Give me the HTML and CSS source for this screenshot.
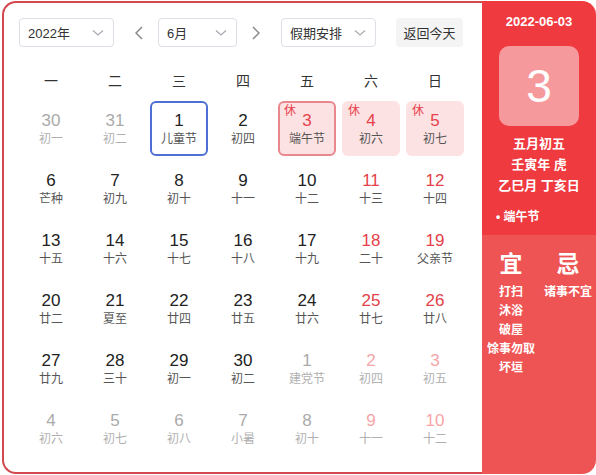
FILE: index.html
```html
<!DOCTYPE html>
<html lang="zh">
<head>
<meta charset="utf-8">
<link rel="stylesheet" href="styles.css">
</head>
<body>
<div class="app">
  <div class="main">
    <div class="toolbar">
      <div class="select sel-year"><span>2022年</span><svg class="chev" viewBox="0 0 12 8"><path d="M1 1.5 L6 6 L11 1.5" /></svg></div>
      <svg class="arrow arrow-prev" viewBox="0 0 8 14"><path d="M7 1 L1 7 L7 13" /></svg>
      <div class="select sel-month"><span>6月</span><svg class="chev" viewBox="0 0 12 8"><path d="M1 1.5 L6 6 L11 1.5" /></svg></div>
      <svg class="arrow arrow-next" viewBox="0 0 8 14"><path d="M1 1 L7 7 L1 13" /></svg>
      <div class="select sel-holiday"><span>假期安排</span><svg class="chev" viewBox="0 0 12 8"><path d="M1 1.5 L6 6 L11 1.5" /></svg></div>
      <div class="today-btn">返回今天</div>
    </div>
    <div class="weekdays">
      <span>一</span><span>二</span><span>三</span><span>四</span><span>五</span><span>六</span><span>日</span>
    </div>
    <div class="grid">
      <div class="cell other"><b>30</b><i>初一</i></div>
      <div class="cell other"><b>31</b><i>初二</i></div>
      <div class="cell today"><b>1</b><i>儿童节</i></div>
      <div class="cell"><b>2</b><i>初四</i></div>
      <div class="cell rest selected"><em>休</em><b>3</b><i>端午节</i></div>
      <div class="cell rest"><em>休</em><b>4</b><i>初六</i></div>
      <div class="cell rest"><em>休</em><b>5</b><i>初七</i></div>

      <div class="cell"><b>6</b><i>芒种</i></div>
      <div class="cell"><b>7</b><i>初九</i></div>
      <div class="cell"><b>8</b><i>初十</i></div>
      <div class="cell"><b>9</b><i>十一</i></div>
      <div class="cell"><b>10</b><i>十二</i></div>
      <div class="cell weekend"><b>11</b><i>十三</i></div>
      <div class="cell weekend"><b>12</b><i>十四</i></div>

      <div class="cell"><b>13</b><i>十五</i></div>
      <div class="cell"><b>14</b><i>十六</i></div>
      <div class="cell"><b>15</b><i>十七</i></div>
      <div class="cell"><b>16</b><i>十八</i></div>
      <div class="cell"><b>17</b><i>十九</i></div>
      <div class="cell weekend"><b>18</b><i>二十</i></div>
      <div class="cell weekend"><b>19</b><i>父亲节</i></div>

      <div class="cell"><b>20</b><i>廿二</i></div>
      <div class="cell"><b>21</b><i>夏至</i></div>
      <div class="cell"><b>22</b><i>廿四</i></div>
      <div class="cell"><b>23</b><i>廿五</i></div>
      <div class="cell"><b>24</b><i>廿六</i></div>
      <div class="cell weekend"><b>25</b><i>廿七</i></div>
      <div class="cell weekend"><b>26</b><i>廿八</i></div>

      <div class="cell"><b>27</b><i>廿九</i></div>
      <div class="cell"><b>28</b><i>三十</i></div>
      <div class="cell"><b>29</b><i>初一</i></div>
      <div class="cell"><b>30</b><i>初二</i></div>
      <div class="cell other"><b>1</b><i>建党节</i></div>
      <div class="cell other weekend"><b>2</b><i>初四</i></div>
      <div class="cell other weekend"><b>3</b><i>初五</i></div>

      <div class="cell other"><b>4</b><i>初六</i></div>
      <div class="cell other"><b>5</b><i>初七</i></div>
      <div class="cell other"><b>6</b><i>初八</i></div>
      <div class="cell other"><b>7</b><i>小暑</i></div>
      <div class="cell other"><b>8</b><i>初十</i></div>
      <div class="cell other weekend"><b>9</b><i>十一</i></div>
      <div class="cell other weekend"><b>10</b><i>十二</i></div>
    </div>
  </div>
  <div class="side">
    <div class="side-top">
      <div class="side-date">2022-06-03</div>
      <div class="big-day">3</div>
      <div class="lunar-lines">
        <div>五月初五</div>
        <div>壬寅年 虎</div>
        <div>乙巳月 丁亥日</div>
      </div>
      <div class="festival">• 端午节</div>
    </div>
    <div class="side-bottom">
      <div class="yiji">
        <div class="yj-head">宜</div>
        <div>打扫</div>
        <div>沐浴</div>
        <div>破屋</div>
        <div>馀事勿取</div>
        <div>坏垣</div>
      </div>
      <div class="yiji">
        <div class="yj-head">忌</div>
        <div>诸事不宜</div>
      </div>
    </div>
  </div>
</div>
</body>
</html>
```

FILE: styles.css
```css
* { box-sizing: border-box; }
html, body { margin: 0; padding: 0; background: #fff; }
body {
  font-family: "Liberation Sans", "Noto Sans CJK SC", Arial, sans-serif;
  color: #333;
}
.app {
  display: flex;
  width: 594px;
  height: 473px;
  margin: 1px 0 0 2px;
}
.main {
  width: 480px;
  height: 100%;
  border: 2px solid #d3474e;
  border-right: none;
  border-radius: 14px 0 0 14px;
  background: #fff;
}
.toolbar {
  display: flex;
  align-items: center;
  height: 29px;
  margin: 15px 0 0 15px;
}
.select {
  display: flex;
  align-items: center;
  justify-content: space-between;
  height: 29px;
  padding: 0 9px 0 8px;
  border: 1px solid #dcdfe6;
  border-radius: 4px;
  font-size: 13px;
  color: #333;
}
.sel-year { width: 95px; }
.sel-month { width: 79px; }
.sel-holiday { width: 95px; }
.chev { width: 12px; height: 8px; }
.chev path { fill: none; stroke: #a8abb2; stroke-width: 1.3; }
.arrow { width: 8px; height: 14px; }
.arrow path { fill: none; stroke: #888; stroke-width: 1.5; }
.arrow-prev { margin: 0 15px 0 21px; }
.arrow-next { margin: 0 21px 0 15px; }
.today-btn {
  margin-left: 20px;
  height: 29px;
  width: 67px;
  display: flex;
  align-items: center;
  justify-content: center;
  background: #f4f4f5;
  border-radius: 4px;
  font-size: 13px;
  color: #333;
}
.weekdays {
  display: grid;
  grid-template-columns: repeat(7, 58px);
  column-gap: 6px;
  margin: 24px 0 0 18px;
  height: 20px;
  line-height: 20px;
  text-align: center;
  font-size: 14px;
  color: #333;
}
.grid {
  display: grid;
  grid-template-columns: repeat(7, 58px);
  grid-auto-rows: 55px;
  column-gap: 6px;
  row-gap: 5px;
  margin: 10px 0 0 18px;
}
.cell {
  position: relative;
  display: flex;
  flex-direction: column;
  align-items: center;
  justify-content: center;
  padding-top: 1px;
  border-radius: 6px;
  border: 2px solid transparent;
}
.cell b {
  font-weight: normal;
  font-size: 17px;
  line-height: 20px;
  color: #222;
}
.cell i {
  font-style: normal;
  font-size: 12px;
  line-height: 17px;
  color: #555;
}
.cell.other b { color: #aaa; }
.cell.other i { color: #b0b0b0; }
.cell.weekend b { color: #e5414a; }
.cell.other.weekend b { color: #f5a5a9; }
.cell.today { border-color: #4e6fd3; }
.cell.rest { background: #fde2e3; }
.cell.rest b { color: #e5414a; }
.cell.selected { border-color: #e8878c; }
.cell em {
  position: absolute;
  left: 4px;
  top: 1px;
  font-style: normal;
  font-size: 12px;
  line-height: 14px;
  color: #e5414a;
}
.side {
  width: 114px;
  height: 100%;
  border-radius: 0 14px 14px 0;
  overflow: hidden;
  display: flex;
  flex-direction: column;
  color: #fff;
}
.side-top {
  background: #ef3a3f;
  height: 234px;
  display: flex;
  flex-direction: column;
  align-items: center;
  padding-top: 13px;
}
.side-date {
  font-size: 13px;
  font-weight: bold;
  line-height: 16px;
}
.big-day {
  margin-top: 16px;
  width: 80px;
  height: 80px;
  border-radius: 10px;
  background: #f5999c;
  display: flex;
  align-items: center;
  justify-content: center;
  font-size: 46px;
  line-height: 1;
}
.lunar-lines {
  margin-top: 7px;
  text-align: center;
  font-size: 13px;
  line-height: 21px;
  font-weight: bold;
}
.festival {
  align-self: flex-start;
  margin: 13px 0 0 14px;
  font-size: 12px;
  font-weight: bold;
  line-height: 16px;
}
.side-bottom {
  flex: 1;
  background: #ef5454;
  display: grid;
  grid-template-columns: 58px 56px;
  padding-top: 15px;
}
.yiji {
  display: flex;
  flex-direction: column;
  align-items: center;
  font-size: 12px;
  font-weight: bold;
  line-height: 19px;
}
.yj-head {
  font-size: 23px;
  line-height: 28px;
  margin-bottom: 5px;
}
```
